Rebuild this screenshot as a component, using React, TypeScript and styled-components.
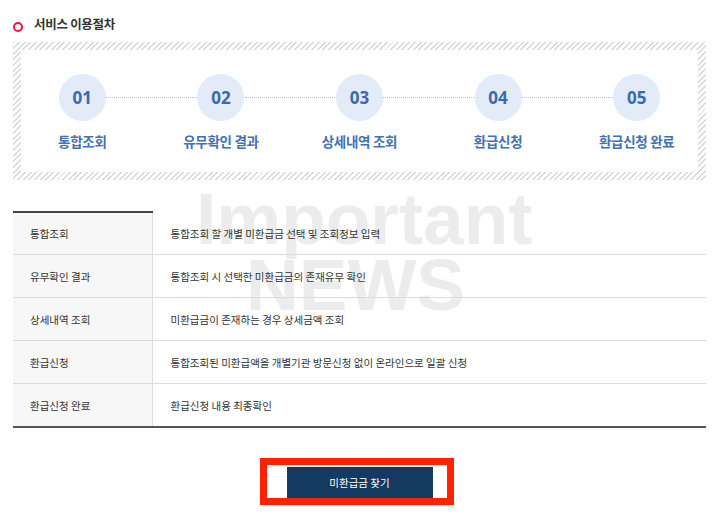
import styled, { createGlobalStyle } from "styled-components";

const GlobalStyle = createGlobalStyle`
  body {
    margin: 0;
    background: #fff;
    font-family: "Noto Sans CJK KR", "Noto Sans", sans-serif;
    color: #333;
  }
`;

const steps = [
  { no: "01", label: "통합조회" },
  { no: "02", label: "유무확인 결과" },
  { no: "03", label: "상세내역 조회" },
  { no: "04", label: "환급신청" },
  { no: "05", label: "환급신청 완료" },
];

const rows = [
  { head: "통합조회", desc: "통합조회 할 개별 미환급금 선택 및 조회정보 입력" },
  { head: "유무확인 결과", desc: "통합조회 시 선택한 미환급금의 존재유무 확인" },
  { head: "상세내역 조회", desc: "미환급금이 존재하는 경우 상세금액 조회" },
  { head: "환급신청", desc: "통합조회된 미환급액을 개별기관 방문신청 없이 온라인으로 일괄 신청" },
  { head: "환급신청 완료", desc: "환급신청 내용 최종확인" },
];

const App = () => {
  return (
    <Page>
      <GlobalStyle />
      <Title>
        <TitleIcon />
        서비스 이용절차
      </Title>
      <StepBox>
        <StepInner>
          <StepList>
            {steps.map((s, i) => (
              <StepItem key={s.no} $last={i === steps.length - 1}>
                <StepCircle>{s.no}</StepCircle>
                <StepLabel>{s.label}</StepLabel>
              </StepItem>
            ))}
          </StepList>
        </StepInner>
      </StepBox>
      <TableWrap>
        <Watermark>
          Important
          <br />
          <NewsLine>NEWS</NewsLine>
        </Watermark>
        <InfoTable>
          <tbody>
            {rows.map((r, i) => (
              <tr key={r.head}>
                <HeadCell $first={i === 0}>{r.head}</HeadCell>
                <BodyCell>{r.desc}</BodyCell>
              </tr>
            ))}
          </tbody>
        </InfoTable>
      </TableWrap>
      <ButtonArea>
        <Highlight>
          <FindButton>미환급금 찾기</FindButton>
        </Highlight>
      </ButtonArea>
    </Page>
  );
};

export default App;

const Page = styled.div`
  width: 693px;
  padding: 13px 0 0 13px;
`;

const Title = styled.h2`
  display: flex;
  align-items: center;
  margin: 0;
  height: 20px;
  font-size: 12.5px;
  font-weight: 700;
  color: #333;
  letter-spacing: -0.3px;
`;

const TitleIcon = styled.span`
  width: 6px;
  height: 6px;
  border: 2.5px solid #e8173a;
  border-radius: 50%;
  margin: 7px 11px 0 0;
`;

const StepBox = styled.div`
  margin-top: 9px;
  padding: 8px;
  background: repeating-linear-gradient(
    135deg,
    #d9d9d9 0 1.4px,
    #fff 1.4px 4px
  );
`;

const StepInner = styled.div`
  background: #fff;
  padding: 24px 0 21px;
`;

const StepList = styled.ul`
  display: grid;
  grid-template-columns: repeat(5, 1fr);
  margin: 0 -8px;
  padding: 0;
  list-style: none;
`;

const StepItem = styled.li<{ $last?: boolean }>`
  position: relative;
  display: flex;
  flex-direction: column;
  align-items: center;

  &::after {
    content: "";
    display: ${(p) => (p.$last ? "none" : "block")};
    position: absolute;
    top: 23px;
    left: calc(50% + 24px);
    right: calc(-50% + 24px);
    border-top: 1px dotted #a9bcd8;
  }
`;

const StepCircle = styled.div`
  width: 47px;
  height: 47px;
  border-radius: 50%;
  background: #e2ebf7;
  display: flex;
  align-items: center;
  justify-content: center;
  font-family: "Noto Sans", "Open Sans", sans-serif;
  font-size: 17px;
  font-weight: 700;
  color: #3c68ad;
`;

const StepLabel = styled.div`
  margin-top: 10px;
  font-size: 13.5px;
  line-height: 20px;
  font-weight: 700;
  color: #4470b4;
  white-space: nowrap;
  letter-spacing: -0.3px;
`;

const TableWrap = styled.div`
  position: relative;
  margin-top: 31px;
`;

const Watermark = styled.div`
  position: absolute;
  left: 183px;
  top: -25px;
  font-family: "Liberation Sans", Arial, sans-serif;
  font-size: 73px;
  line-height: 66px;
  font-weight: 700;
  color: #ececec;
  white-space: nowrap;
  z-index: 0;
`;

const NewsLine = styled.span`
  padding-left: 50px;
`;

const InfoTable = styled.table`
  position: relative;
  z-index: 1;
  width: 100%;
  border-collapse: collapse;
  border-bottom: 2px solid #555;
  font-size: 10.5px;
  color: #333;
`;

const HeadCell = styled.th<{ $first?: boolean }>`
  width: 139px;
  height: 42px;
  padding: 0 0 0 17px;
  text-align: left;
  font-weight: 400;
  background: #f7f7f7;
  border-top: ${(p) => (p.$first ? "2px solid #444" : "1px solid #dcdcdc")};
  border-right: 1px solid #dcdcdc;
  box-sizing: border-box;
`;

const BodyCell = styled.td`
  height: 42px;
  padding: 0 0 0 18px;
  border-top: 1px solid #dcdcdc;
  tr:first-child > & {
    border-top: none;
  }
`;

const ButtonArea = styled.div`
  display: flex;
  justify-content: center;
  margin-top: 30px;
`;

const Highlight = styled.div`
  display: flex;
  margin-right: 6px;
  padding: 2px 14px 0 20px;
  border: 7px solid #ff2200;
`;

const FindButton = styled.button`
  width: 146px;
  height: 31px;
  border: none;
  background: #143a62;
  color: #fff;
  font-family: "Noto Sans CJK KR", sans-serif;
  font-size: 10.5px;
  cursor: pointer;
`;
